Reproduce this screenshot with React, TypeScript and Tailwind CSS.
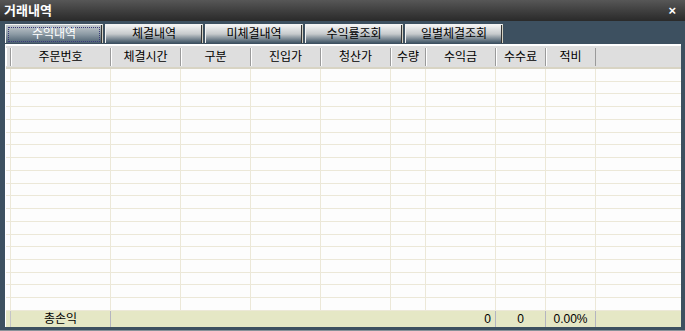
import React from 'react';

const FONT = { fontFamily: "'Liberation Sans', 'Noto Sans CJK KR', sans-serif" };

const GRID = 'grid grid-cols-[5px_100px_70px_70px_70px_70px_35px_70px_50px_50px_1fr]';

const TABS = ['수익내역', '체결내역', '미체결내역', '수익률조회', '일별체결조회'];
const HEADERS = ['', '주문번호', '체결시간', '구분', '진입가', '청산가', '수량', '수익금', '수수료', '적비', ''];
const ROWS = Array.from({ length: 19 }, (_, i) => i);

function Tab({ label, active }: { label: string; active?: boolean }) {
  return (
    <div
      className={`relative flex h-[19px] w-[98px] items-center justify-center border-l border-t border-[#f4f4f4] border-r border-r-[#d4d0c0] text-[12px] leading-none shadow-[inset_-1px_0_0_#333] ${
        active
          ? 'bg-gradient-to-b from-[#c4cace] via-[#8e9ca6] to-[#4c6070] text-white'
          : 'bg-gradient-to-b from-[#f4f4f4] via-[#c6cacc] to-[#405565] text-black'
      }`}
    >
      {active && <span className="absolute inset-x-[2px] top-[2px] bottom-[1px] border border-dotted border-[#3a3a7a]" />}
      <span className="relative">{label}</span>
    </div>
  );
}

export default function App() {
  return (
    <div className="flex h-[331px] w-[685px] flex-col bg-[#3d5060] border-b border-[#8a9299]" style={FONT}>
      <div className="flex h-[21px] items-center justify-between bg-gradient-to-b from-[#575757] to-[#2a2a2a] pl-[4px] pr-[9px]">
        <span className="text-[13px] font-bold text-white">거래내역</span>
        <span className="text-[13px] font-bold leading-none text-white">×</span>
      </div>

      <div className="flex h-[23px] gap-[2px] pl-[5px] pt-[3px]">
        {TABS.map((t, i) => (
          <Tab key={t} label={t} active={i === 0} />
        ))}
      </div>

      <div className="flex flex-1 flex-col pb-[3px] pl-[5px] pr-[4px]">
        <div className="flex flex-1 flex-col border-l border-t-2 border-white bg-[#fdfdfd]">
          <div className={`${GRID} h-[23px] border-b-2 border-[#d8d4c4] bg-[#dedede] py-[2px] text-[12px] text-black`}>
            {HEADERS.map((h, i) => (
              <div
                key={i}
                className={`flex items-center justify-center ${
                  i < HEADERS.length - 1 ? 'border-r border-[#9a9a9a] shadow-[inset_1px_0_0_#ffffff]' : ''
                }`}
              >
                {h}
              </div>
            ))}
          </div>

          <div className="flex flex-1 flex-col">
            {ROWS.map((r) => (
              <div key={r} className={`${GRID} flex-1 border-b border-[#ece8d8]`}>
                {HEADERS.map((_, i) => (
                  <div key={i} className={i < HEADERS.length - 1 ? 'border-r border-[#ece8d8]' : ''} />
                ))}
              </div>
            ))}
          </div>

          <div className="grid h-[16px] grid-cols-[5px_100px_385px_50px_50px_1fr] bg-[#e5e7c5] text-[12px] leading-none text-black">
            <div className="border-r border-[#c4c4c8]" />
            <div className="flex items-center justify-center border-r border-[#b4b4c0]">총손익</div>
            <div className="flex items-center justify-end border-r border-[#b4b4c0] pr-[4px]">0</div>
            <div className="flex items-center justify-center border-r border-[#b4b4c0]">0</div>
            <div className="flex items-center justify-center border-r border-[#b4b4c0]">0.00%</div>
            <div />
          </div>
        </div>
      </div>
    </div>
  );
}
